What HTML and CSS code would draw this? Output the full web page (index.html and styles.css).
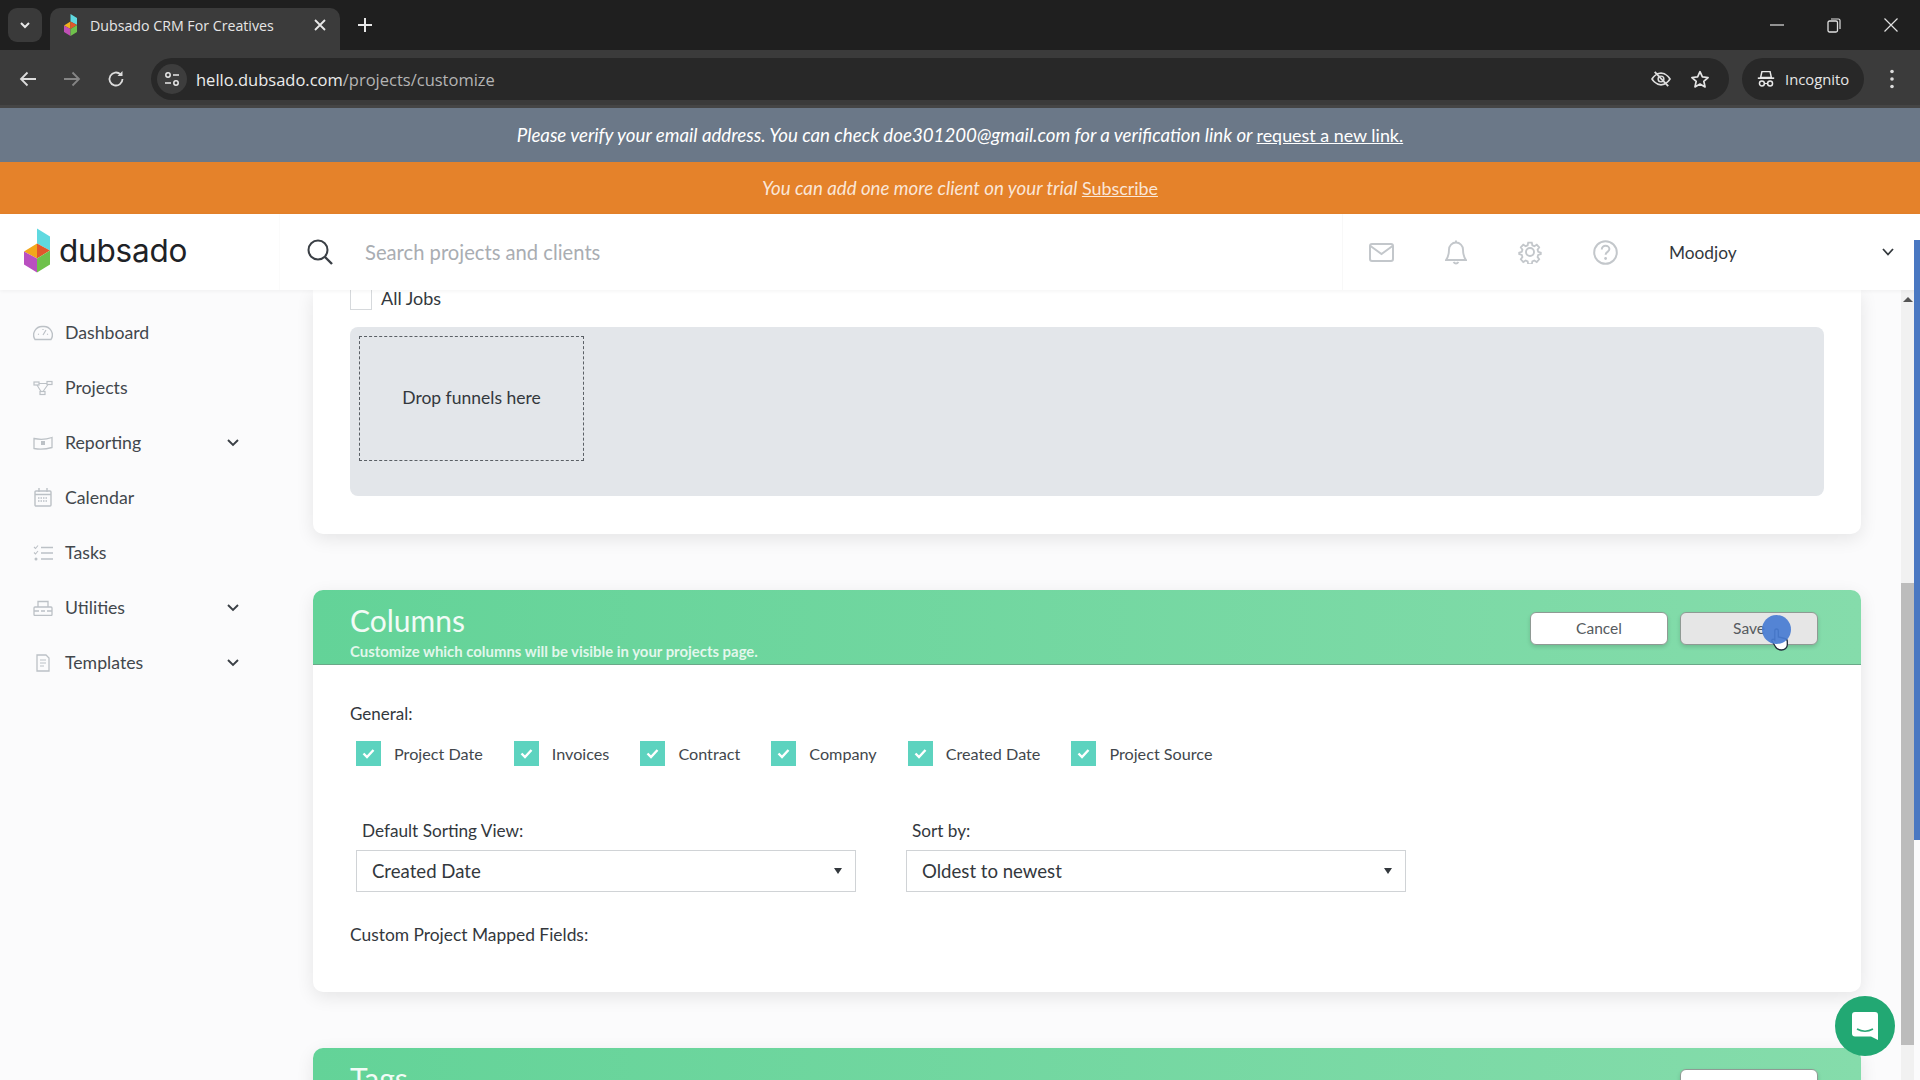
FILE: index.html
```html
<!DOCTYPE html>
<html lang="en">
<head>
<meta charset="utf-8">
<title>Dubsado CRM For Creatives</title>
<link rel="stylesheet" href="styles.css">
</head>
<body>
<div class="tabstrip">
  <div class="tab-search"><svg width="14" height="14" viewBox="0 0 14 14"><path d="M3 5l4 4 4-4" fill="none" stroke="#e8e8e8" stroke-width="2"/></svg></div>
  <div class="tab">
    <svg class="favicon" width="13" height="22" viewBox="0 0 26 44"><path d="M13 0l13 8v14l-13-7z" fill="#5fd9e0"/><path d="M13 15L0 23l13 7z" fill="#f2b01c"/><path d="M13 15l13 7-13 8z" fill="#e2572b"/><path d="M0 23l13 7v14L0 36z" fill="#c04fb5"/><path d="M13 30l13-8v14l-13 8z" fill="#6fc14b"/></svg>
    <span class="tab-title">Dubsado CRM For Creatives</span>
    <svg class="tab-close" width="12" height="12" viewBox="0 0 12 12"><path d="M1 1l10 10M11 1L1 11" stroke="#e8e8e8" stroke-width="1.8"/></svg>
  </div>
  <svg class="new-tab" width="16" height="16" viewBox="0 0 16 16"><path d="M8 1v14M1 8h14" stroke="#e8e8e8" stroke-width="2"/></svg>
  <div class="win-controls">
    <svg width="14" height="14" viewBox="0 0 14 14"><path d="M0 7h14" stroke="#e0e0e0" stroke-width="1.2"/></svg>
    <svg width="14" height="16" viewBox="0 0 14 16"><rect x="1" y="4" width="9.5" height="11" rx="1.5" fill="none" stroke="#e0e0e0" stroke-width="1.3"/><path d="M4 2h7.5A1.5 1.5 0 0 1 13 3.500V12" fill="none" stroke="#e0e0e0" stroke-width="1.2"/></svg>
    <svg width="14" height="14" viewBox="0 0 14 14"><path d="M.5.5l13 13M13.500.5l-13 13" stroke="#e0e0e0" stroke-width="1.2"/></svg>
  </div>
</div>
<div class="toolbar">
  <svg class="nav-icon" width="18" height="16" viewBox="0 0 18 16"><path d="M17 8H2M8.500 1.500L2 8l6.500 6.500" fill="none" stroke="#dcdcdc" stroke-width="1.8"/></svg>
  <svg class="nav-icon" width="18" height="16" viewBox="0 0 18 16"><path d="M1 8h15M9.500 1.500L16 8l-6.500 6.500" fill="none" stroke="#858585" stroke-width="1.8"/></svg>
  <svg class="nav-icon" width="18" height="18" viewBox="0 0 18 18"><path d="M15.500 9A6.500 6.500 0 1 1 13.500 4.300" fill="none" stroke="#dcdcdc" stroke-width="1.8"/><path d="M15.500 1v5h-5z" fill="#dcdcdc"/></svg>
  <div class="omnibox">
    <div class="site-icon"><svg width="16" height="16" viewBox="0 0 16 16"><circle cx="4" cy="4" r="2.200" fill="none" stroke="#e8e8e8" stroke-width="1.500"/><path d="M9 4h6M1 12h6" stroke="#e8e8e8" stroke-width="1.600"/><circle cx="12" cy="12" r="2.200" fill="none" stroke="#e8e8e8" stroke-width="1.500"/></svg></div>
    <div class="url">hello.dubsado.com<span class="url-path">/projects/customize</span></div>
    <svg class="omni-eye" width="22" height="18" viewBox="0 0 22 20"><path d="M1 10s4-6.500 10-6.500S21 10 21 10s-4 6.500-10 6.500S1 10 1 10z" fill="none" stroke="#dedede" stroke-width="1.800"/><circle cx="11" cy="10" r="3.200" fill="none" stroke="#dedede" stroke-width="1.600"/><path d="M4 2l15 16" stroke="#dedede" stroke-width="2"/></svg>
    <svg class="omni-star" width="20" height="19" viewBox="0 0 20 20"><path d="M10 1.800l2.500 5.500 6 .6-4.500 4 1.300 5.900L10 14.800l-5.300 3 1.300-5.900-4.500-4 6-.6z" fill="none" stroke="#e4e4e4" stroke-width="1.800" stroke-linejoin="round"/></svg>
  </div>
  <div class="incognito">
    <svg width="18" height="18" viewBox="0 0 20 22"><path d="M5 2h10l1.500 7h-13z" fill="none" stroke="#e8e8e8" stroke-width="1.800"/><path d="M0 10h20" stroke="#e8e8e8" stroke-width="2"/><circle cx="5" cy="16.500" r="3" fill="none" stroke="#e8e8e8" stroke-width="1.800"/><circle cx="15" cy="16.500" r="3" fill="none" stroke="#e8e8e8" stroke-width="1.800"/><path d="M8 16.500h4" stroke="#e8e8e8" stroke-width="1.500"/></svg>
    <span>Incognito</span>
  </div>
  <svg class="menu-dots" width="4" height="20" viewBox="0 0 4 20"><circle cx="2" cy="2.500" r="1.800" fill="#dcdcdc"/><circle cx="2" cy="10" r="1.800" fill="#dcdcdc"/><circle cx="2" cy="17.500" r="1.800" fill="#dcdcdc"/></svg>
</div>
<div class="banner banner-grey">Please verify your email address. You can check doe301200@gmail.com for a verification link or&nbsp;<a class="banner-link">request a new link.</a></div>
<div class="banner banner-orange">You can add one more client on your trial&nbsp;<a class="banner-link">Subscribe</a></div>
<header class="topbar">
  <div class="brand">
    <svg width="26" height="45" viewBox="0 0 26 44"><path d="M13 0l13 8v14l-13-7z" fill="#5fd9e0"/><path d="M13 15L0 23l13 7z" fill="#f2a71c"/><path d="M13 15l13 7-13 8z" fill="#e2572b"/><path d="M0 23l13 7v14L0 36z" fill="#b94fc0"/><path d="M13 30l13-8v14l-13 8z" fill="#6fc14b"/></svg>
    <span class="brand-name">dubsado</span>
  </div>
  <div class="search">
    <svg width="28" height="28" viewBox="0 0 28 28"><circle cx="12" cy="12" r="9.500" fill="none" stroke="#3a3f45" stroke-width="2"/><path d="M19 19l7 7" stroke="#3a3f45" stroke-width="2.400"/></svg>
    <span class="search-text">Search projects and clients</span>
  </div>
  <div class="top-icons">
    <svg width="25" height="19" viewBox="0 0 25 19"><rect x="1" y="1" width="23" height="17" rx="2" fill="none" stroke="#c3c7cb" stroke-width="2"/><path d="M1.500 3l11 8 11-8" fill="none" stroke="#c3c7cb" stroke-width="2"/></svg>
    <svg width="22" height="25" viewBox="0 0 22 25"><path d="M11 2.500a7 7 0 0 0-7 7c0 6-1.500 8.500-3 10.500h20c-1.500-2-3-4.500-3-10.500a7 7 0 0 0-7-7zM11 2.500V.5M8.500 22c1.500 2 3.500 2 5 0" fill="none" stroke="#c3c7cb" stroke-width="1.900"/></svg>
    <svg width="24" height="24" viewBox="0 0 24 24"><path d="M10 1.500h4l.6 3 2.200 1 2.700-1.600 2.700 3-1.800 2.500.7 2.300 2.900 1v1.600l-2.900 1-.7 2.300 1.800 2.500-2.700 3-2.700-1.600-2.200 1-.6 3h-4l-.6-3-2.200-1-2.700 1.600-2.700-3 1.800-2.500-.7-2.300-2.900-1v-1.600l2.900-1 .7-2.300-1.800-2.500 2.700-3 2.700 1.600 2.200-1z" transform="translate(1.200 1.200) scale(.9)" fill="none" stroke="#c3c7cb" stroke-width="2"/><circle cx="12" cy="12" r="4" fill="none" stroke="#c3c7cb" stroke-width="1.900"/></svg>
    <svg width="25" height="25" viewBox="0 0 25 25"><circle cx="12.500" cy="12.500" r="11.300" fill="none" stroke="#c3c7cb" stroke-width="2"/><path d="M8.800 9.500c0-2.300 1.800-3.700 3.800-3.700s3.800 1.300 3.800 3.300c0 2.800-3.800 2.700-3.800 5.700" fill="none" stroke="#c3c7cb" stroke-width="2"/><circle cx="12.600" cy="18.500" r="1.400" fill="#c3c7cb"/></svg>
  </div>
  <div class="user">
    <span>Moodjoy</span>
    <svg width="12" height="8" viewBox="0 0 12 8"><path d="M1 1l5 5.500L11 1" fill="none" stroke="#33383d" stroke-width="1.800"/></svg>
  </div>
</header>
<div class="app">
  <nav class="sidebar">
    <a class="nav-item"><svg class="nav-svg" width="20" height="16" viewBox="0 0 20 16"><path d="M2 14.500h16A8.500 8.500 0 0 0 10 1.500a8.500 8.500 0 0 0-8 13z" fill="none" stroke="#bcc1c6" stroke-width="1.400"/><path d="M10 10l3-5M5 9l1 .5M15 9l-1 .5M10 4v1" stroke="#bcc1c6" stroke-width="1.200"/></svg><span class="nav-label">Dashboard</span></a>
    <a class="nav-item"><svg class="nav-svg" width="20" height="16" viewBox="0 0 20 16"><rect x="1" y="2" width="5" height="3" fill="none" stroke="#bcc1c6" stroke-width="1.200"/><rect x="14" y="1.500" width="5" height="3" fill="none" stroke="#bcc1c6" stroke-width="1.200"/><rect x="7" y="11.500" width="5" height="3" fill="none" stroke="#bcc1c6" stroke-width="1.200"/><path d="M6 3.500h8M4 5l4 6.500M15 4.500l-5 7" stroke="#bcc1c6" stroke-width="1.100" fill="none"/></svg><span class="nav-label">Projects</span></a>
    <a class="nav-item"><svg class="nav-svg" width="20" height="14" viewBox="0 0 20 14"><path d="M1 2.500q9 2 18-1v10q-9 2.500-18 1z" fill="none" stroke="#bcc1c6" stroke-width="1.300"/><rect x="8" y="5" width="4" height="4" fill="#bcc1c6"/></svg><span class="nav-label">Reporting</span><svg class="nav-chev" width="12" height="8" viewBox="0 0 12 8"><path d="M1 1l5 5 5-5" fill="none" stroke="#3a3f45" stroke-width="1.900"/></svg></a>
    <a class="nav-item"><svg class="nav-svg" width="20" height="19" viewBox="0 0 20 19"><rect x="2" y="3" width="16" height="15" rx="1" fill="none" stroke="#bcc1c6" stroke-width="1.400"/><path d="M2 6.500h16M6 0v4M14 0v4" stroke="#bcc1c6" stroke-width="1.400"/><path d="M5 10h10M5 13h10" stroke="#bcc1c6" stroke-width="1.600" stroke-dasharray="1.500 1"/></svg><span class="nav-label">Calendar</span></a>
    <a class="nav-item"><svg class="nav-svg" width="20" height="16" viewBox="0 0 20 16"><path d="M8 2.500h12M8 8h12M8 14h12" stroke="#bcc1c6" stroke-width="1.400"/><path d="M1 2l1.500 1.500L5 .5M1 7.500L2.500 9 5 6" fill="none" stroke="#bcc1c6" stroke-width="1.100"/><circle cx="3" cy="14" r="1.500" fill="#bcc1c6"/></svg><span class="nav-label">Tasks</span></a>
    <a class="nav-item"><svg class="nav-svg" width="20" height="16" viewBox="0 0 20 16"><rect x="1" y="7" width="18" height="8.500" rx="1" fill="none" stroke="#bcc1c6" stroke-width="1.300"/><path d="M5 7V1.500h10V7M1 11h5M14 11h5M8 11h4" fill="none" stroke="#bcc1c6" stroke-width="1.300"/></svg><span class="nav-label">Utilities</span><svg class="nav-chev" width="12" height="8" viewBox="0 0 12 8"><path d="M1 1l5 5 5-5" fill="none" stroke="#3a3f45" stroke-width="1.900"/></svg></a>
    <a class="nav-item"><svg class="nav-svg" width="20" height="18" viewBox="0 0 20 18"><path d="M4 1h9l3 3v13H4z" fill="none" stroke="#bcc1c6" stroke-width="1.300"/><path d="M7 6h6M7 9h6M7 12h4" stroke="#bcc1c6" stroke-width="1.100"/></svg><span class="nav-label">Templates</span><svg class="nav-chev" width="12" height="8" viewBox="0 0 12 8"><path d="M1 1l5 5 5-5" fill="none" stroke="#3a3f45" stroke-width="1.900"/></svg></a>
  </nav>
  <main class="content">
    <section class="card card-funnels">
      <label class="alljobs"><span class="box-empty"></span>All Jobs</label>
      <div class="dropzone"><div class="dropbox">Drop funnels here</div></div>
    </section>
    <section class="card card-columns">
      <div class="card-head">
        <div class="head-text">
          <h2 class="head-title">Columns</h2>
          <p class="head-sub">Customize which columns will be visible in your projects page.</p>
        </div>
        <div class="head-buttons">
          <button class="btn">Cancel</button>
          <button class="btn btn-active">Save</button>
        </div>
      </div>
      <div class="card-body">
        <div class="label-general">General:</div>
        <div class="checks">
          <div class="check"><span class="box"><svg width="13" height="11" viewBox="0 0 13 11"><path d="M1.500 5.500l3.500 3.500 6.500-7" fill="none" stroke="#fff" stroke-width="2.400"/></svg></span>Project Date</div>
          <div class="check"><span class="box"><svg width="13" height="11" viewBox="0 0 13 11"><path d="M1.500 5.500l3.500 3.500 6.500-7" fill="none" stroke="#fff" stroke-width="2.400"/></svg></span>Invoices</div>
          <div class="check"><span class="box"><svg width="13" height="11" viewBox="0 0 13 11"><path d="M1.500 5.500l3.500 3.500 6.500-7" fill="none" stroke="#fff" stroke-width="2.400"/></svg></span>Contract</div>
          <div class="check"><span class="box"><svg width="13" height="11" viewBox="0 0 13 11"><path d="M1.500 5.500l3.500 3.500 6.500-7" fill="none" stroke="#fff" stroke-width="2.400"/></svg></span>Company</div>
          <div class="check"><span class="box"><svg width="13" height="11" viewBox="0 0 13 11"><path d="M1.500 5.500l3.500 3.500 6.500-7" fill="none" stroke="#fff" stroke-width="2.400"/></svg></span>Created Date</div>
          <div class="check"><span class="box"><svg width="13" height="11" viewBox="0 0 13 11"><path d="M1.500 5.500l3.500 3.500 6.500-7" fill="none" stroke="#fff" stroke-width="2.400"/></svg></span>Project Source</div>
        </div>
        <div class="selects">
          <div class="field"><div class="field-label">Default Sorting View:</div><div class="select">Created Date<i class="caret"></i></div></div>
          <div class="field"><div class="field-label">Sort by:</div><div class="select">Oldest to newest<i class="caret"></i></div></div>
        </div>
        <div class="label-custom">Custom Project Mapped Fields:</div>
      </div>
    </section>
    <section class="card card-tags">
      <div class="card-head card-head-tags">
        <h2 class="head-title">Tags</h2>
        <div class="head-buttons"><button class="btn"></button></div>
      </div>
    </section>
  </main>
  <div class="scrollbar"><i class="scroll-arrow"></i><div class="scroll-thumb"></div></div>
  <div class="scroll-blue"></div>
  <svg class="cursor" width="18" height="24" viewBox="0 0 18 24"><path d="M5.500 2c1.200 0 1.800.8 1.800 2v6l6.500 1.500c1.500.4 2.500 1.300 2.500 3V18c0 2.500-2.500 5-6 5-3 0-5-1.500-6-3.500L1 14c-.6-1.200.8-2.500 2-1.500l.8.8V4c0-1.200.5-2 1.700-2z" fill="#fff" stroke="#1e2a3a" stroke-width="1.300"/></svg>
  <div class="click-dot"></div>
  <div class="chat"><svg width="28" height="30" viewBox="0 0 28 30"><path d="M4 1h20a3 3 0 0 1 3 3v25l-7-3.500H4a3 3 0 0 1-3-3V4a3 3 0 0 1 3-3z" fill="#fff"/><path d="M6 18q8 4.500 16 0" fill="none" stroke="#2aa876" stroke-width="1.500"/></svg></div>
</div>
</body>
</html>
```
FILE: styles.css
```css
* { box-sizing: border-box; }
html, body { margin: 0; height: 100%; overflow: hidden; }
body { display: flex; flex-direction: column; background: #fff; font-family: "Lato", "Liberation Sans", sans-serif; color: #33383d; }

.tabstrip { flex: 0 0 50px; display: flex; align-items: flex-start; background: #1f1f1f; padding: 8px 0 0 8px; }
.tab-search { width: 34px; height: 34px; border-radius: 9px; background: #3a3a3a; display: flex; align-items: center; justify-content: center; }
.tab { width: 290px; height: 42px; margin-left: 8px; background: #3b3b3b; border-radius: 10px 10px 0 0; display: flex; align-items: center; padding: 0 14px 8px 14px; color: #e6e6e6; }
.favicon { flex: none; }
.tab-title { font-family: "Open Sans", sans-serif; font-size: 14.200px; margin-left: 13px; flex: 1; white-space: nowrap; }
.tab-close { flex: none; }
.new-tab { margin: 9px 0 0 17px; }
.win-controls { margin-left: auto; display: flex; align-items: center; gap: 43px; padding: 9px 22px 0 0; }

.toolbar { flex: 0 0 58px; background: #3b3b3b; display: flex; align-items: center; padding: 3px 0 0 19px; border-bottom: 3px solid #454545; }
.nav-icon { flex: none; margin-right: 26px; }
.omnibox { width: 1578px; height: 42px; border-radius: 21px; background: #282828; display: flex; align-items: center; padding: 0 19px 0 6px; flex: none; }
.site-icon { width: 30px; height: 30px; border-radius: 50%; background: #3d3d3d; display: flex; align-items: center; justify-content: center; flex: none; }
.url { margin-left: 9px; font-family: "Open Sans", sans-serif; font-size: 16.500px; color: #ececec; white-space: nowrap; flex: 1; }
.url-path { color: #b4b4b4; }
.omni-star { margin-left: 18px; }
.incognito { margin-left: 13px; width: 122px; height: 42px; border-radius: 21px; background: #282828; display: flex; align-items: center; gap: 10px; padding-left: 15px; font-family: "Open Sans", sans-serif; font-size: 14.800px; color: #e6e6e6; flex: none; }
.menu-dots { margin-left: 26px; flex: none; }

.banner { display: flex; justify-content: center; align-items: center; font-size: 18.700px; font-style: italic; color: #fff; }
.banner-grey { flex: 0 0 54px; background: #6b7888; padding-bottom: 1px; }
.banner-orange { flex: 0 0 52px; background: #e5822a; color: rgba(255,255,255,.82); padding-bottom: 1px; }
.banner-link { text-decoration: underline; font-style: normal; font-size: 17.900px; }

.topbar { position: relative; z-index: 2; flex: 0 0 76px; background: #fff; display: flex; align-items: center; box-shadow: 0 1px 4px rgba(0,0,0,.05); }
.brand { width: 280px; padding: 0 0 3px 24px; display: flex; align-items: center; gap: 9px; flex: none; border-right: 1px solid #fbfbfb; height: 100%; }
.brand-name { font-family: "Inter", sans-serif; font-size: 31.500px; letter-spacing: -.2px; color: #1e2226; }
.search { flex: 1; height: 100%; display: flex; align-items: center; gap: 31px; padding: 0 0 1px 26px; border-right: 1px solid #f8f8f8; }
.search-text { font-size: 20.200px; color: #a9adb2; }
.top-icons { display: flex; align-items: center; flex: none; width: 326px; padding-left: 26px; gap: 51px; }
.user { flex: none; width: 251px; display: flex; align-items: center; justify-content: space-between; padding-right: 26px; font-size: 17.300px; }

.app { flex: 1; min-height: 0; position: relative; display: flex; background: #fbfbfc; }
.sidebar { flex: 0 0 280px; padding-top: 15px; }
.nav-item { height: 55px; display: flex; align-items: center; padding-left: 33px; font-size: 17.700px; color: #42474c; }
.nav-svg { flex: none; margin-right: 12px; }
.nav-label { flex: 1; }
.nav-chev { flex: none; margin-right: 41px; }

.content { flex: 1; min-width: 0; overflow: hidden; padding: 0 40px 0 33px; }
.card { background: #fff; border-radius: 10px; box-shadow: 0 5px 18px rgba(0,0,0,.09); }
.card-funnels { height: 244px; padding: 0 37px; border-radius: 0 0 10px 10px; }
.alljobs { display: flex; align-items: flex-start; gap: 9px; height: 37px; font-size: 18px; line-height: 16px; }
.box-empty { width: 22px; height: 22px; margin-top: -2px; border: 1px solid #d6d9dc; background: #fff; flex: none; }
.dropzone { height: 169px; background: #e3e6ea; border-radius: 8px; padding: 9px; }
.dropbox { width: 225px; height: 125px; border: 1px dashed #5a5f65; display: flex; align-items: center; justify-content: center; font-size: 17.500px; padding-bottom: 2px; }
.card-columns { margin-top: 56px; height: 402px; }
.card-head { height: 75px; background: linear-gradient(90deg, #63d398, #85dcab); border-radius: 10px 10px 0 0; border-bottom: 1px solid #6aa888; display: flex; justify-content: space-between; align-items: center; padding: 0 43px 0 37px; }
.head-text { padding-top: 11px; }
.head-title { margin: 0; font-size: 30px; line-height: 30px; font-weight: 400; color: #f2fbf6; }
.head-sub { margin: 7px 0 0; font-size: 14.900px; line-height: 18px; font-weight: 700; color: rgba(255,255,255,.82); }
.head-buttons { display: flex; gap: 12px; margin-top: 2px; }
.btn { width: 138px; height: 33px; background: #fff; border: 1px solid #8f9a94; border-radius: 6px; font: 15.500px "Lato", sans-serif; color: #565b60; box-shadow: 0 2px 4px rgba(0,0,0,.14); padding: 0; }
.btn-active { background: #e6e6e6; }
.card-body { padding: 38px 37px 0; }
.label-general { font-size: 17px; line-height: 22px; }
.checks { display: flex; margin: 16px 0 0 6px; }
.check { display: flex; align-items: center; gap: 13px; margin-right: 31px; font-size: 16.200px; color: #42474c; }
.box { width: 25px; height: 25px; background: #5dd3bf; display: flex; align-items: center; justify-content: center; flex: none; }
.selects { display: flex; gap: 50px; margin: 54px 0 0 6px; }
.field { width: 500px; }
.field-label { padding-left: 6px; font-size: 17.200px; line-height: 22px; }
.select { margin-top: 8px; height: 42px; border: 1px solid #d0d3d6; display: flex; align-items: center; justify-content: space-between; padding: 0 13px 0 15px; font-size: 18.600px; }
.caret { border-top: 6px solid #33383d; border-left: 4px solid transparent; border-right: 4px solid transparent; }
.label-custom { margin-top: 32px; font-size: 17.400px; line-height: 22px; }
.card-tags { margin-top: 56px; height: 80px; }
.card-head-tags { align-items: flex-start; padding-top: 15px; height: 80px; border: 0; }
.card-head-tags .head-buttons { padding-top: 6px; margin-top: 0; }

.scrollbar { flex: 0 0 13px; background: #f1f1f1; margin-right: 6px; padding-top: 7px; }
.scroll-arrow { display: block; width: 0; margin: 0 auto 281px; border-bottom: 5px solid #555; border-left: 5px solid transparent; border-right: 5px solid transparent; }
.scroll-thumb { height: 462px; width: 100%; background: #bcbcbc; }
.scroll-blue { position: absolute; right: 0; top: -50px; width: 6px; height: 600px; background: #4a78c2; z-index: 3; }
.cursor { position: absolute; left: 1771px; top: 337px; }
.click-dot { position: absolute; left: 1762px; top: 325px; width: 29px; height: 29px; border-radius: 50%; background: rgba(72,124,210,.93); }
.chat { position: absolute; left: 1835px; top: 706px; width: 60px; height: 60px; border-radius: 50%; background: #22a873; display: flex; align-items: center; justify-content: center; }
```
